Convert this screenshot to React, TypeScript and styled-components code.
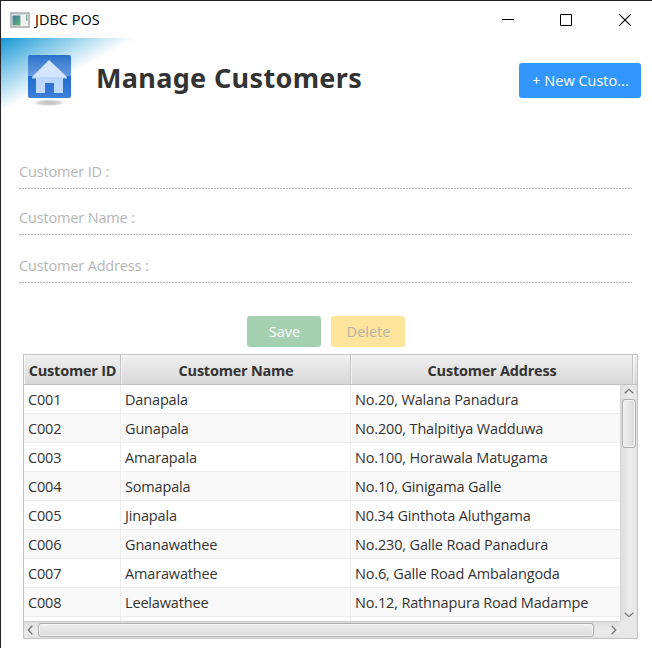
import React from "react";
import styled, { createGlobalStyle } from "styled-components";

const GlobalStyle = createGlobalStyle`
  * { box-sizing: border-box; }
  body { margin: 0; background: #fff; overflow: hidden; }
`;

const Window = styled.div`
  width: 652px;
  height: 648px;
  display: flex;
  flex-direction: column;
  overflow: hidden;
  border-top: 1px solid #211f26;
  border-left: 1px solid #242428;
  background: #fff;
  color: #333;
  font-family: "Open Sans", "Noto Sans", sans-serif;
  font-size: 14.5px;
  letter-spacing: -0.16px;
  white-space: nowrap;
`;

const TitleBar = styled.div`
  height: 37px;
  flex: none;
  display: flex;
  align-items: center;
  padding-left: 9px;
`;

const WindowTitle = styled.span`
  margin-left: 5px;
  color: #000;
  letter-spacing: 0;
  line-height: 20px;
`;

const WindowControls = styled.div`
  display: flex;
  margin: 0 -2px 0 auto;
`;

const ControlButton = styled.button`
  width: 58.5px;
  height: 35px;
  display: flex;
  align-items: center;
  justify-content: center;
  padding: 0;
  border: 0;
  background: none;
`;

const Header = styled.header`
  height: 114px;
  flex: none;
  display: flex;
  align-items: flex-start;
  background: linear-gradient(151.5deg, #1596d4 0, #67bce4 22px, #b2ddf1 43px, #fff 65px) no-repeat 0 0 / 138px 76px;
`;

const HomeIcon = styled.svg`
  flex: none;
  margin: 16px 0 0 26px;
`;

const Heading = styled.h1`
  margin: 20px 0 0 23px;
  font-family: "Noto Sans", sans-serif;
  font-size: 27px;
  font-weight: 700;
  line-height: 40px;
  letter-spacing: 0.34px;
`;

const NewButton = styled.button`
  width: 122px;
  height: 35px;
  margin: 25px 11px 0 auto;
  padding: 0 0 1px 1px;
  border: 0;
  border-radius: 3px;
  background: #3296ff;
  color: #fff;
  font: inherit;
  letter-spacing: 0;
`;

const Form = styled.form`
  height: 163px;
  flex: none;
  padding: 0 20px 0 18px;
`;

const Field = styled.label<{ $h: number }>`
  height: ${(p) => p.$h}px;
  display: flex;
  align-items: flex-end;
  padding-bottom: 7px;
  background: repeating-linear-gradient(90deg, #b6b6b6 0 2px, #fff 2px 3px) no-repeat 0 100% / 100% 1px;
  color: #b6b6b6;
  line-height: 20px;
`;

const Actions = styled.div`
  display: flex;
  flex: none;
  gap: 10px;
  height: 39px;
  margin-left: 246px;
`;

const ActionButton = styled.button<{ $bg: string; $fg: string }>`
  width: 74px;
  height: 31px;
  margin-top: 1px;
  padding: 0 0 0 1px;
  border: 0;
  border-radius: 3px;
  background: ${(p) => p.$bg};
  color: ${(p) => p.$fg};
  font: inherit;
`;

const Table = styled.div`
  width: 615px;
  height: 285px;
  flex: none;
  display: flex;
  flex-direction: column;
  margin-left: 22px;
  border: 1px solid #c3c3c3;
`;

const TableHead = styled.div`
  height: 30px;
  flex: none;
  display: grid;
  grid-template-columns: 97px 230px 282px 1fr;
  border-bottom: 1px solid #c3c3c3;
  background: linear-gradient(#f0f0f0, #d8d8d8);
`;

const HeadCell = styled.div`
  padding-left: 1px;
  border-right: 1px solid #c3c3c3;
  box-shadow: inset 1px 1px #f7f7f7;
  text-align: center;
  font-weight: 700;
  line-height: 31px;
  height: 29px;
  letter-spacing: -0.22px;
  &:last-child { border-right: 0; }
`;

const Viewport = styled.div`
  flex: 1;
  min-height: 0;
  display: grid;
  grid-template-columns: 596px 17px;
  grid-template-rows: 236px 17px;
`;

const Rows = styled.div`
  overflow: hidden;
`;

const Row = styled.div<{ $alt: boolean }>`
  height: 29px;
  display: grid;
  grid-template-columns: 97px 230px 1fr;
  border-bottom: 1px solid #ededed;
  background: ${(p) => (p.$alt ? "#f9f9f9" : "#fff")};
`;

const Cell = styled.div`
  padding-left: 4px;
  border-right: 1px solid #ededed;
  line-height: 29px;
  &:last-child { border-right: 0; }
`;

const VerticalBar = styled.div`
  display: flex;
  flex-direction: column;
  align-items: center;
  padding: 3px 0;
  border-left: 1px solid #d5d5d5;
  background: linear-gradient(90deg, #dedede, #ececec 60%, #e4e4e4);
`;

const VerticalThumb = styled.div`
  width: 14px;
  height: 49px;
  margin: 5px 0 auto;
  border: 1px solid #adadad;
  border-radius: 3px;
  box-shadow: inset 0 0 0 1px #f4f4f4;
  background: linear-gradient(90deg, #f0f0f0, #d9d9d9);
`;

const HorizontalBar = styled.div`
  display: flex;
  align-items: center;
  padding: 0 3px;
  border-top: 1px solid #c8c8c8;
  background: linear-gradient(#dedede, #ececec 60%, #e4e4e4);
`;

const HorizontalThumb = styled.div`
  width: 556px;
  height: 14px;
  margin: 0 auto 0 5px;
  border: 1px solid #adadad;
  border-radius: 3px;
  box-shadow: inset 0 0 0 1px #f4f4f4;
  background: linear-gradient(#f0f0f0, #d9d9d9);
`;

const Corner = styled.div`
  background: #e8e8e8;
`;

const ArrowIcon = styled.svg`
  flex: none;
`;

const Arrow = ({ dir }: { dir: "up" | "down" | "left" | "right" }) => {
  const vertical = dir === "up" || dir === "down";
  const paths = {
    up: "M.7 5.3 5 1.3l4.3 4",
    down: "M.7.7 5 4.7l4.3-4",
    left: "M5.3.7 1.3 5l4 4.3",
    right: "M.7.7l4 4.3-4 4.3",
  };
  return (
    <ArrowIcon width={vertical ? 10 : 6} height={vertical ? 6 : 10}>
      <path d={paths[dir]} fill="none" stroke="#777" strokeWidth="1.3" />
    </ArrowIcon>
  );
};

const AppIcon = () => (
  <svg width="20" height="16" viewBox="0 0 20 16">
    <defs>
      <linearGradient id="pane" x2="1" y2="1">
        <stop stopColor="#3b759c" />
        <stop offset="1" stopColor="#66b878" />
      </linearGradient>
    </defs>
    <path d="M1 1h18v14H1z" fill="#f7f7f7" stroke="#a5a8aa" strokeWidth="1.5" />
    <path d="M2 2h16v1H2z" fill="#d5d8d9" />
    <path d="M2.5 3.5h8v10h-8z" fill="url(#pane)" />
    <path d="M12 4h4v9h-4z" fill="#edf0ef" />
    <path d="M16 3h1.5v6H16z" fill="#83b7a0" />
  </svg>
);

const customers = [
  ["C001", "Danapala", "No.20, Walana Panadura"],
  ["C002", "Gunapala", "No.200, Thalpitiya Wadduwa"],
  ["C003", "Amarapala", "No.100, Horawala Matugama"],
  ["C004", "Somapala", "No.10, Ginigama Galle"],
  ["C005", "Jinapala", "N0.34 Ginthota Aluthgama"],
  ["C006", "Gnanawathee", "No.230, Galle Road Panadura"],
  ["C007", "Amarawathee", "No.6, Galle Road Ambalangoda"],
  ["C008", "Leelawathee", "No.12, Rathnapura Road Madampe"],
  ["", "", ""],
];

export default function App() {
  return (
    <Window>
      <GlobalStyle />
      <TitleBar>
        <AppIcon />
        <WindowTitle>JDBC POS</WindowTitle>
        <WindowControls>
          <ControlButton aria-label="Minimize">
            <svg width="12" height="12"><path d="M0 5.5h12" stroke="#000" /></svg>
          </ControlButton>
          <ControlButton aria-label="Maximize">
            <svg width="12" height="12"><path d="M.5.5h11v11H.5z" fill="none" stroke="#000" /></svg>
          </ControlButton>
          <ControlButton aria-label="Close">
            <svg width="12" height="12"><path d="m.3.3 11.4 11.4M11.7.3.3 11.7" stroke="#000" strokeWidth="1.1" /></svg>
          </ControlButton>
        </WindowControls>
      </TitleBar>
      <Header>
        <HomeIcon width="46" height="54" viewBox="0 0 46 54">
          <defs>
            <linearGradient id="tile" x2="0" y2="1">
              <stop stopColor="#2c72cb" />
              <stop offset=".48" stopColor="#669bdf" />
              <stop offset=".49" stopColor="#1f6acb" />
              <stop offset="1" stopColor="#3e82da" />
            </linearGradient>
            <linearGradient id="house" x2="0" y2="1">
              <stop offset=".5" stopColor="#d2e4ff" />
              <stop offset=".51" stopColor="#b9d5ff" />
              <stop offset="1" stopColor="#c3dbff" />
            </linearGradient>
            <radialGradient id="shade">
              <stop stopColor="#bbb" stopOpacity=".95" />
              <stop offset=".6" stopColor="#c4c4c4" stopOpacity=".75" />
              <stop offset="1" stopColor="#ddd" stopOpacity="0" />
            </radialGradient>
          </defs>
          <ellipse cx="22" cy="48.7" rx="17" ry="3.6" fill="url(#shade)" />
          <rect x="1" y="1" width="43" height="43" rx="2" fill="url(#tile)" />
          <path d="M22 6 40 23v1.5h-4V39h-9V29h-9v10H9V24.500H5V23z" fill="url(#house)" />
        </HomeIcon>
        <Heading>Manage Customers</Heading>
        <NewButton>+ New Custo...</NewButton>
      </Header>
      <Form>
        <Field $h={37}>Customer ID :</Field>
        <Field $h={46}>Customer Name :</Field>
        <Field $h={48}>Customer Address :</Field>
      </Form>
      <Actions>
        <ActionButton $bg="#a5d0b0" $fg="#fff">Save</ActionButton>
        <ActionButton $bg="#ffe59b" $fg="#b5b2a9">Delete</ActionButton>
      </Actions>
      <Table>
        <TableHead>
          <HeadCell>Customer ID</HeadCell>
          <HeadCell>Customer Name</HeadCell>
          <HeadCell>Customer Address</HeadCell>
          <HeadCell />
        </TableHead>
        <Viewport>
          <Rows>
            {customers.map(([id, name, address], i) => (
              <Row key={i} $alt={i % 2 === 1}>
                <Cell>{id}</Cell>
                <Cell>{name}</Cell>
                <Cell>{address}</Cell>
              </Row>
            ))}
          </Rows>
          <VerticalBar>
            <Arrow dir="up" />
            <VerticalThumb />
            <Arrow dir="down" />
          </VerticalBar>
          <HorizontalBar>
            <Arrow dir="left" />
            <HorizontalThumb />
            <Arrow dir="right" />
          </HorizontalBar>
          <Corner />
        </Viewport>
      </Table>
    </Window>
  );
}
